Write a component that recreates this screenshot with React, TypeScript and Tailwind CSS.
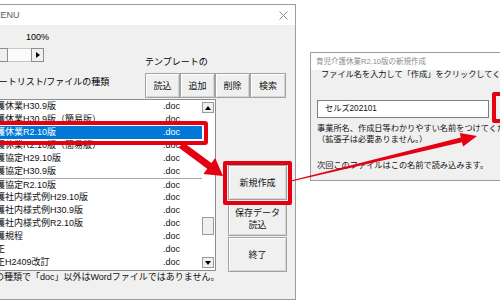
import React from "react";

const rows: { name: string; sel?: boolean; line?: boolean }[] = [
  { name: "育児介護休業H30.9版" },
  { name: "育児介護休業H30.9版（簡易版）" },
  { name: "育児介護休業R2.10版", sel: true },
  { name: "育児介護休業R2.10版（簡易版）" },
  { name: "育児介護協定H29.10版" },
  { name: "育児介護協定H30.9版" },
  { name: "育児介護協定R2.10版", line: true },
  { name: "育児介護社内様式例H29.10版" },
  { name: "育児介護社内様式例H30.9版" },
  { name: "育児介護社内様式例R2.10版" },
  { name: "育児介護規程" },
  { name: "規程改正" },
  { name: "規程改正H2409改訂" },
];

function Btn({ children, className }: { children: React.ReactNode; className: string }) {
  return (
    <div
      className={`flex flex-col items-center justify-center bg-[#f0f0f0] border border-[#a3a3a3] shadow-[inset_1px_1px_0_#ffffff,inset_-1px_-1px_0_#d4d4d4] text-[9px] leading-[12px] text-[#111] ${className}`}
    >
      {children}
    </div>
  );
}

export default function App() {
  return (
    <div className="relative w-[500px] h-[308px] overflow-hidden bg-white text-black font-['Liberation_Sans','Noto_Sans_CJK_JP',sans-serif] text-[9px]">
      {/* Main window */}
      <div className="absolute left-[-44px] top-[4px] w-[340px] h-[296px] flex flex-col border border-[#9d9d9d] bg-[#f0f0f0] overflow-hidden">
        <div className="relative h-[20px] flex-none bg-white flex items-center">
          <span className="pl-[36px] leading-[12px] text-[#5a5a5a]">MENU</span>
          <svg className="absolute left-[322px] top-[6px]" width="9" height="9" viewBox="0 0 9 9">
            <path d="M0.5 0.5 L8.5 8.5 M8.5 0.5 L0.5 8.5" stroke="#8a8a8a" strokeWidth="1" fill="none" />
          </svg>
        </div>

        {/* Row A */}
        <div className="flex h-[48px] flex-none">
          <div className="ml-[39px] flex flex-col w-[48px]">
            <span className="mt-[6px] pl-[30px] leading-[12px]">100%</span>
            <div className="mt-[5px] flex w-[48px] h-[14px]">
              <div className="w-[12px] h-[14px] border border-[#8f8f8f] bg-[#f0f0f0]" />
              <div className="flex-1 h-[14px] border-y border-[#c8c8c8] bg-[#fbfbfb]" />
              <div className="w-[13px] h-[14px] border border-[#8f8f8f] bg-[#f0f0f0] flex items-center justify-center">
                <svg width="4" height="6" viewBox="0 0 4 6">
                  <path d="M0 0 L4 3 L0 6 Z" fill="#000" />
                </svg>
              </div>
            </div>
          </div>
          <span className="ml-[101px] mt-[31px] self-start leading-[12px] whitespace-nowrap">テンプレートの</span>
        </div>

        {/* Row B */}
        <div className="flex h-[25px] flex-none">
          <div className="w-[188px] pl-[6px] pt-[3px] leading-[12px] whitespace-nowrap">テンプレートリスト/ファイルの種類</div>
          <div className="flex">
            <Btn className="w-[35px] h-[25px]">読込</Btn>
            <Btn className="w-[35px] h-[25px]">追加</Btn>
            <Btn className="w-[35px] h-[25px]">削除</Btn>
            <Btn className="w-[36px] h-[25px]">検索</Btn>
          </div>
        </div>

        {/* Row C */}
        <div className="flex items-start mt-[1px] flex-none">
          <div className="ml-[8px] w-[251px] h-[172px] flex-none border border-[#8a8d94] bg-white flex overflow-hidden">
            <div className="w-[236px] flex flex-col">
              {rows.map((r, i) => (
                <div
                  key={i}
                  className={`h-[13px] flex-none flex items-center pl-[3px] leading-[13px] whitespace-nowrap ${
                    r.sel ? "bg-[#0078d7] text-white" : "text-[#111]"
                  } ${r.line ? "border-t border-[#a8a8a8]" : ""}`}
                >
                  <span className="w-[194px] overflow-hidden">{r.name}</span>
                  <span>.doc</span>
                </div>
              ))}
            </div>
            <div className="w-[13px] flex flex-col bg-white">
              <div className="mt-[2px] w-[12px] h-[11px] border border-[#9a9a9a] bg-[#f0f0f0] flex items-center justify-center">
                <svg width="6" height="4" viewBox="0 0 6 4">
                  <path d="M0 4 L3 0 L6 4 Z" fill="#000" />
                </svg>
              </div>
              <div className="mt-[104px] w-[12px] h-[18px] border border-[#9a9a9a] bg-[#f0f0f0]" />
              <div className="mt-[22px] w-[12px] h-[11px] border border-[#9a9a9a] bg-[#f0f0f0] flex items-center justify-center">
                <svg width="6" height="4" viewBox="0 0 6 4">
                  <path d="M0 0 L6 0 L3 4 Z" fill="#000" />
                </svg>
              </div>
            </div>
          </div>
          <div className="ml-[12px] mt-[66px] flex flex-col gap-[1px] w-[59px]">
            <Btn className="w-[59px] h-[35px]">新規作成</Btn>
            <Btn className="w-[59px] h-[35px]">
              <span>保存データ</span>
              <span>読込</span>
            </Btn>
            <Btn className="w-[59px] h-[35px]">終了</Btn>
          </div>
        </div>

        {/* Row D */}
        <div className="flex-none pl-[2px] leading-[10px] whitespace-nowrap text-[#111]">
          ファイルの種類で「doc」以外はWordファイルではありません。
        </div>
      </div>

      {/* New-creation dialog */}
      <div className="absolute left-[310px] top-[52px] w-[220px] h-[129px] border border-[#9d9d9d] bg-[#f0f0f0] flex flex-col text-[8.2px]">
        <div className="h-[17px] flex-none bg-white flex items-center pl-[5px] text-[7.5px] text-[#8c8c8c] whitespace-nowrap">
          育児介護休業R2.10版の新規作成
        </div>
        <div className="pl-[10px] leading-[10px] whitespace-nowrap text-[#111]">
          ファイル名を入力して「作成」をクリックしてください。
        </div>
        <div className="ml-[6px] mt-[20px] w-[172px] h-[18px] border border-[#7d7d7d] bg-white flex items-center pl-[7px] text-[#111]">
          セルズ202101
        </div>
        <div className="pl-[6px] mt-[6px] leading-[10px] whitespace-nowrap text-[#111]">
          事業所名、作成日等わかりやすい名前をつけてください。
        </div>
        <div className="pl-[6px] mt-[1px] leading-[10px] whitespace-nowrap text-[#111]">（拡張子は必要ありません。）</div>
        <div className="pl-[6px] mt-[16px] leading-[10px] whitespace-nowrap text-[#111]">
          次回このファイルはこの名前で読み込みます。
        </div>
      </div>

      {/* Annotations */}
      <div className="absolute left-[-10px] top-[121px] w-[218px] h-[24px] border-[4px] border-[#e50012] rounded-[3px]" />
      <div className="absolute left-[223px] top-[161px] w-[69px] h-[44px] border-[4px] border-[#e50012] rounded-[2px]" />
      <div className="absolute left-[492px] top-[92px] w-[30px] h-[31px] border-[4px] border-[#e50012] rounded-[2px]" />
      <svg className="absolute left-0 top-0 pointer-events-none" width="500" height="308" viewBox="0 0 500 308">
        <polygon
          points="183.1,142.2 211.4,163.1 215.2,157.9 223,176 203.4,174.0 207.2,168.7 178.9,147.8"
          fill="#e50012"
        />
        <polygon
          points="290.9,180.5 460.8,137.4 459.8,133.0 477,136 463.1,146.6 462.0,142.2 291.1,181.5"
          fill="#e50012"
        />
      </svg>
    </div>
  );
}
